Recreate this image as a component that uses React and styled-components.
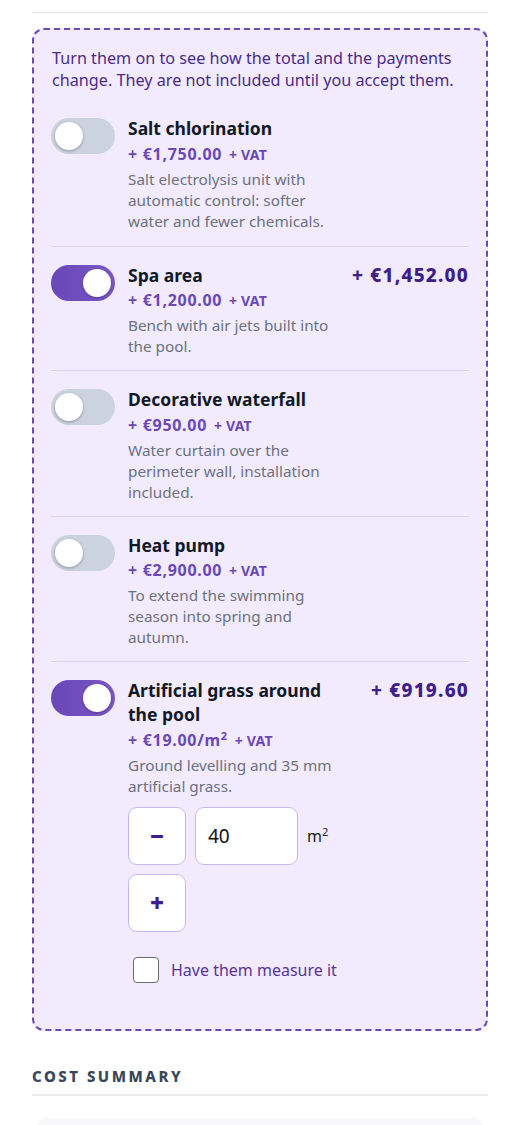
import React, { useState } from "react";
import styled, { createGlobalStyle } from "styled-components";

const GlobalStyle = createGlobalStyle`
  body {
    margin: 0;
    background: #ffffff;
    font-family: "Noto Sans", "Open Sans", sans-serif;
  }
  * { box-sizing: border-box; }
`;

const Page = styled.div`
  padding: 12px 32px 0;
`;

const TopRule = styled.div`
  border-top: 1px solid #e6e6ea;
  margin-bottom: 15px;
`;

const ExtrasBox = styled.section`
  border: 2px dashed #6a4bb5;
  border-radius: 12px;
  background: #f1ebfd;
  padding: 17px 17px 46px;
`;

const Intro = styled.p`
  margin: 0 0 25px 1px;
  font-size: 16.2px;
  line-height: 22px;
  color: #4a2b8a;
`;

const Item = styled.div`
  display: flex;
  align-items: flex-start;
  padding: ${(p) => (p.$first ? "0 0 14px" : "16px 0 13px")};
  border-top: ${(p) => (p.$first ? "none" : "1px solid #dcd2f4")};
  &:last-child {
    padding-bottom: 0;
  }
`;

const Switch = styled.button`
  flex: 0 0 auto;
  position: relative;
  width: 64px;
  height: 36px;
  margin: 2px 13px 0 0;
  border: none;
  border-radius: 18px;
  padding: 0;
  cursor: pointer;
  background: ${(p) =>
    p.$on ? "linear-gradient(90deg, #6a47b8, #7a57c6)" : "#cbd3de"};
  &::after {
    content: "";
    position: absolute;
    top: 4px;
    left: ${(p) => (p.$on ? "32px" : "4px")};
    width: 28px;
    height: 28px;
    border-radius: 50%;
    background: #ffffff;
    box-shadow: 0 1px 3px rgba(30, 20, 60, 0.35);
  }
`;

const Info = styled.div`
  flex: 0 0 218px;
`;

const Title = styled.div`
  font-size: 17.5px;
  font-weight: 700;
  line-height: 24px;
  color: #111827;
`;

const Price = styled.div`
  margin-top: 3.5px;
  font-size: 16px;
  font-weight: 700;
  letter-spacing: 0.7px;
  line-height: 20px;
  color: #6a48b6;
  sup {
    font-size: 11px;
    line-height: 0;
  }
`;

const Vat = styled.span`
  font-size: 14px;
  letter-spacing: 0.2px;
  margin-left: 2px;
`;

const Desc = styled.p`
  margin: 4px 0 0;
  font-size: 15.3px;
  line-height: 21px;
  color: #6b7280;
`;

const Total = styled.div`
  margin-left: auto;
  font-size: 19px;
  font-weight: 800;
  letter-spacing: 1.2px;
  line-height: 25px;
  color: #3f1d8a;
  white-space: nowrap;
`;

const Stepper = styled.div`
  display: flex;
  flex-wrap: wrap;
  align-items: center;
  gap: 9px;
  width: 210px;
  margin-top: 10px;
`;

const StepButton = styled.button`
  width: 58px;
  height: 58px;
  border: 1px solid #c8b8f1;
  border-radius: 9px;
  background: #ffffff;
  color: #3f1d8a;
  font-size: 24px;
  font-weight: 900;
  font-family: inherit;
  cursor: pointer;
  display: flex;
  align-items: center;
  justify-content: center;
`;

const AreaInput = styled.input`
  width: 103px;
  height: 58px;
  border: 1px solid #c8b8f1;
  border-radius: 9px;
  background: #ffffff;
  padding: 0 12px;
  font-size: 19px;
  font-family: inherit;
  color: #111;
  outline: none;
`;

const Unit = styled.span`
  font-size: 16px;
  color: #222;
  sup {
    font-size: 11px;
  }
`;

const CheckRow = styled.label`
  display: flex;
  align-items: center;
  gap: 12px;
  margin: 25px 0 0 5px;
  font-size: 16px;
  color: #5a339a;
  cursor: pointer;
`;

const CheckBox = styled.input`
  appearance: none;
  width: 26px;
  height: 26px;
  margin: 0;
  border: 1.5px solid #6b6b6b;
  border-radius: 4px;
  background: #ffffff;
`;

const SectionTitle = styled.h2`
  margin: 35px 0 0;
  padding-bottom: 8px;
  border-bottom: 2px solid #ececef;
  font-size: 15px;
  font-weight: 800;
  letter-spacing: 2.5px;
  text-transform: uppercase;
  color: #3a4658;
`;

const SummaryCard = styled.div`
  margin: 22px 4px 0;
  height: 60px;
  border-radius: 10px 10px 0 0;
  background: #f8f8fa;
`;

const extras = [
  {
    id: "salt",
    title: "Salt chlorination",
    price: "+ €1,750.00",
    desc: "Salt electrolysis unit with automatic control: softer water and fewer chemicals.",
  },
  {
    id: "spa",
    title: "Spa area",
    price: "+ €1,200.00",
    desc: "Bench with air jets built into the pool.",
    total: "+ €1,452.00",
  },
  {
    id: "waterfall",
    title: "Decorative waterfall",
    price: "+ €950.00",
    desc: "Water curtain over the perimeter wall, installation included.",
  },
  {
    id: "heat",
    title: "Heat pump",
    price: "+ €2,900.00",
    desc: "To extend the swimming season into spring and autumn.",
  },
  {
    id: "grass",
    title: "Artificial grass around the pool",
    price: "+ €19.00/m",
    perArea: true,
    desc: "Ground levelling and 35 mm artificial grass.",
    total: "+ €919.60",
  },
];

export default function App() {
  const [active, setActive] = useState({ spa: true, grass: true });
  const [area, setArea] = useState(40);

  const toggle = (id) => setActive((a) => ({ ...a, [id]: !a[id] }));

  return (
    <Page>
      <GlobalStyle />
      <TopRule />
      <ExtrasBox>
        <Intro>
          Turn them on to see how the total and the payments change. They are
          not included until you accept them.
        </Intro>
        {extras.map((x, i) => (
          <Item key={x.id} $first={i === 0}>
            <Switch $on={!!active[x.id]} onClick={() => toggle(x.id)} aria-label={x.title} />
            <Info>
              <Title>{x.title}</Title>
              <Price>
                {x.price}
                {x.perArea && <sup>2</sup>} <Vat>+ VAT</Vat>
              </Price>
              <Desc>{x.desc}</Desc>
              {x.perArea && (
                <>
                  <Stepper>
                    <StepButton onClick={() => setArea((v) => Math.max(0, v - 1))}>−</StepButton>
                    <AreaInput value={area} onChange={(e) => setArea(e.target.value)} />
                    <Unit>
                      m<sup>2</sup>
                    </Unit>
                    <StepButton onClick={() => setArea((v) => Number(v) + 1)}>+</StepButton>
                  </Stepper>
                  <CheckRow>
                    <CheckBox type="checkbox" />
                    Have them measure it
                  </CheckRow>
                </>
              )}
            </Info>
            {active[x.id] && x.total && <Total>{x.total}</Total>}
          </Item>
        ))}
      </ExtrasBox>
      <SectionTitle>Cost summary</SectionTitle>
      <SummaryCard />
    </Page>
  );
}
